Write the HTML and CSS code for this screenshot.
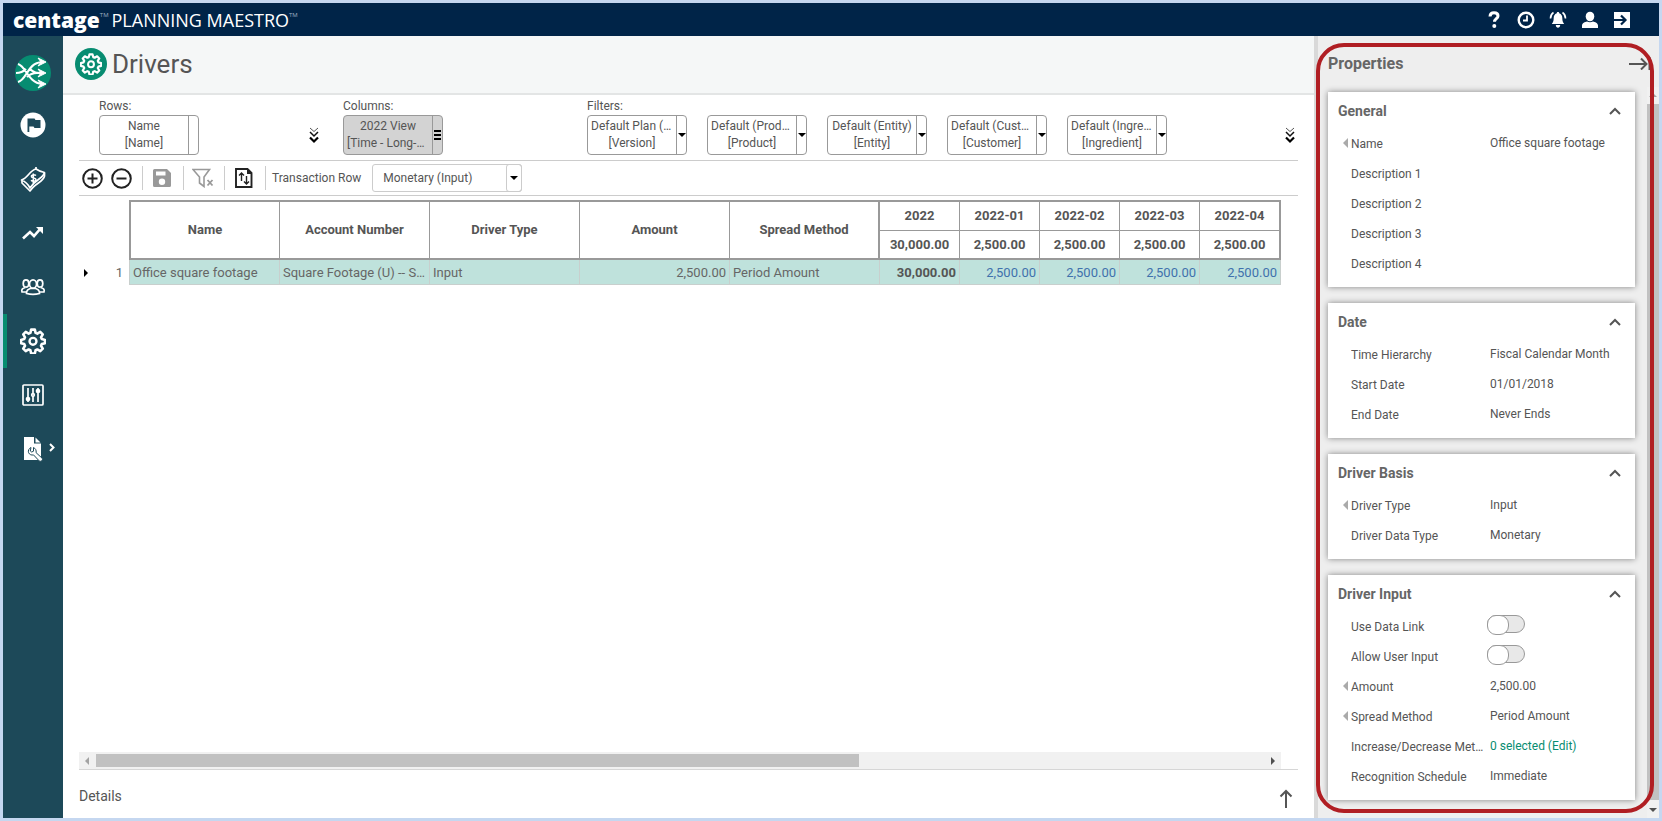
FILE: index.html
```html
<!DOCTYPE html>
<html lang="en">
<head>
  <meta charset="UTF-8">
  <meta name="viewport" content="width=device-width, initial-scale=1.0">
  <title>Drivers - Planning Maestro</title>
  <link rel="stylesheet" href="styles.css">
</head>
<body>
  <!-- Shared icons -->
  <svg class="sprite" aria-hidden="true">
    <symbol id="gear" viewBox="0 0 24 24">
      <path d="M10.300 1.500h3.400l.7 3 1.600.7 2.700-1.600 2.300 2.300-1.600 2.700.7 1.600 3 .8v3l-3 .8-.7 1.600 1.600 2.700-2.300 2.300-2.700-1.600-1.600.7-.7 3h-3.400l-.7-3-1.600-.7-2.700 1.600L3 19.100l1.600-2.700-.7-1.600-3-.8v-3l3-.8.7-1.600L3 5.900l2.300-2.300L8 5.200l1.600-.7z" fill="none" stroke="currentColor" stroke-width="2.400" stroke-linejoin="round"/>
      <circle cx="12" cy="12.300" r="3.200" fill="none" stroke="currentColor" stroke-width="2.200"/>
    </symbol>
    <symbol id="chevrons" viewBox="0 0 10 17">
      <path d="M1 1l4 3.500L9 1" fill="none" stroke="#555" stroke-width="1"/>
      <path d="M1 5l4 4 4-4" fill="none" stroke="#111" stroke-width="1.500"/>
      <path d="M1 10.500l4 4 4-4" fill="none" stroke="#000" stroke-width="2.200"/>
    </symbol>
    <symbol id="up" viewBox="0 0 12 8">
      <path d="M1 7l5-5 5 5" fill="none" stroke="currentColor" stroke-width="2"/>
    </symbol>
  </svg>

  <div class="app">
    <header class="topbar">
      <div class="brand">
        <span class="brand-name">centage</span><sup class="tm">TM</sup>
        <span class="brand-product">PLANNING MAESTRO</span><sup class="tm">TM</sup>
      </div>
      <div class="top-actions">
        <button type="button" aria-label="Help">
          <svg width="18" height="18" viewBox="0 0 18 18"><path d="M5 5.500C5.200 2.700 6.900 1.800 9 1.800c2.300 0 4 1.200 4 3.100 0 2.700-3.500 2.800-3.500 5.900" fill="none" stroke="#fff" stroke-width="3"/><circle cx="9.300" cy="15" r="2" fill="#fff"/></svg>
        </button>
        <button type="button" aria-label="History">
          <svg width="18" height="18" viewBox="0 0 18 18"><circle cx="9" cy="9" r="7.300" fill="none" stroke="#fff" stroke-width="2.400"/><path d="M10 4.500v5H6" fill="none" stroke="#fff" stroke-width="1.800"/></svg>
        </button>
        <button type="button" aria-label="Notifications">
          <svg width="18" height="18" viewBox="0 0 18 18"><path d="M9 1c.8 0 1.200.6 1.200 1.200C12.500 3 13.300 5 13.300 7c0 3 .6 4.500 1.900 6H2.800c1.300-1.500 1.900-3 1.900-6 0-2 .8-4 3.100-4.800C7.800 1.600 8.200 1 9 1zM6.800 14h4.400c0 3.600-4.400 3.600-4.400 0z" fill="#fff"/><path d="M4.500 1.500C2.400 2.800 1.500 5 1.500 7.500M13.500 1.500c2.100 1.300 3 3.500 3 6" fill="none" stroke="#fff" stroke-width="1.600"/></svg>
        </button>
        <button type="button" aria-label="Account">
          <svg width="18" height="18" viewBox="0 0 18 18"><ellipse cx="9" cy="5.500" rx="4.300" ry="4.800" fill="#fff"/><path d="M1 17v-2.500C1 12 4 11 6 10.500c2 1 4 1 6 0 2 .5 5 1.500 5 4V17z" fill="#fff"/></svg>
        </button>
        <button type="button" aria-label="Sign out">
          <svg width="18" height="18" viewBox="0 0 18 18"><path d="M1 1h16v16H1z" fill="#fff"/><path d="M1 9h11M8 4.500L12.500 9 8 13.500" fill="none" stroke="#002448" stroke-width="2.200"/></svg>
        </button>
      </div>
    </header>

    <div class="workspace">
      <nav class="sidebar" aria-label="Main">
        <a class="nav-home" href="#" aria-label="Home">
          <svg width="36" height="36" viewBox="0 0 36 36" fill="none" stroke="#fff" stroke-width="2.200"><circle cx="18" cy="18" r="18" fill="#078c71" stroke="none"/><path d="M3 9c8 2 10 19 24 20M3 27C12 25 12 8 27 7M1 18c5 0 7-1 10-4M15 14c4 4 6 4 14 4M12 22c3-3 5-4 10-4"/><path d="M23 3l8 4-8 4 3-4zM23 14l8 4-8 4 3-4zM23 25l8 4-8 4 3-4z" fill="#fff" stroke-width="1"/></svg>
        </a>
        <a class="nav-item" href="#" aria-label="Goals">
          <svg width="26" height="26" viewBox="0 0 26 26"><circle cx="13" cy="13" r="12.500" fill="#fff"/><path d="M7.500 6.500h7l1 1.500h5v8h-6l-1-1.500H9.300V20H7.500z" fill="#1d4959"/></svg>
        </a>
        <a class="nav-item" href="#" aria-label="Financials">
          <svg width="26" height="26" viewBox="0 0 26 26" fill="none" stroke="#fff" stroke-width="1.700" stroke-linejoin="round"><path d="M1.500 14C8 12 10 4 16 3c3 2 5 3 8.500 3.500-1 6-8 5.500-14.500 15.500C8 18 5 15.500 1.500 14z"/><path d="M2 14.500v2.500L10 25c5-8 13.500-9 14.500-15V7M16 3V1"/><path d="M16 9.500c-2-1.500-5-.5-4.500 1.200s4.500.8 4.500 2.800-3.500 2.300-5 .8M13.300 7.500v9.500" stroke-width="1.500"/></svg>
        </a>
        <a class="nav-item" href="#" aria-label="Trends">
          <svg width="24" height="24" viewBox="0 0 24 24"><path d="M2 17.500l7-6.500 4 4 7-8" fill="none" stroke="#fff" stroke-width="2.600"/><path d="M15 6h7v7z" fill="#fff"/></svg>
        </a>
        <a class="nav-item" href="#" aria-label="Personnel">
          <svg width="26" height="18" viewBox="0 0 26 18" fill="#1d4959" stroke="#fff" stroke-width="1.700"><ellipse cx="6" cy="5.500" rx="2.800" ry="3.600"/><ellipse cx="20" cy="5.500" rx="2.800" ry="3.600"/><path d="M7 14H2c-1-3 1-4 3.500-4.500M19 14h5c1-3-1-4-3.500-4.500"/><ellipse cx="13" cy="6" rx="3.500" ry="4.200"/><path d="M10.500 10.500C8 11.500 6.500 12 6.500 15.500c4 1 9 1 13 0 0-3.500-1.500-4-4-5z"/></svg>
        </a>
        <a class="nav-item active" href="#" aria-label="Drivers" aria-current="page">
          <svg width="26" height="26"><use href="#gear"/></svg>
        </a>
        <a class="nav-item" href="#" aria-label="Settings">
          <svg width="22" height="22" viewBox="0 0 22 22" fill="none" stroke="#fff" stroke-width="1.700"><rect x="1" y="1" width="20" height="20" rx="1"/><path d="M6 4v14M11 4v14M16 4v14"/><circle cx="6" cy="15" r="1.500" fill="#fff"/><circle cx="11" cy="11" r="1.300" fill="#1d4959"/><circle cx="16" cy="7" r="1.500" fill="#fff"/></svg>
        </a>
        <a class="nav-item" href="#" aria-label="Tools">
          <svg width="20" height="26" viewBox="0 0 20 26"><path d="M1 1h10v6.500h7V24H1z" fill="#fff"/><path d="M12.500 1.500l5 5h-5z" fill="#fff"/><path d="M8 11.500c-2 .8-3.200 3.200-2.400 5.200.9 2 3 2.700 4.900 2.200l5.700 6c1.500 1.300 4.300-1 2.900-2.700l-6-5.500c.4-2.600-.6-4.200-2.600-5.200v3.700l-1.800.8-1.400-1z" fill="#fff" stroke="#1d4959" stroke-width="1"/></svg>
          <svg class="nav-more" width="6" height="9" viewBox="0 0 6 9"><path d="M1 1l3.500 3.500L1 8" fill="none" stroke="#fff" stroke-width="2"/></svg>
        </a>
      </nav>

      <main class="content">
        <div class="page-title">
          <span class="title-icon"><svg width="22" height="22"><use href="#gear"/></svg></span>
          <h1>Drivers</h1>
        </div>

        <div class="panel">
          <section class="dimensions">
            <div class="dim-group rows">
              <span class="dim-label">Rows:</span>
              <button class="dim" type="button"><span class="dim-text"><span>Name</span><span>[Name]</span></span><span class="dim-handle"></span></button>
            </div>
            <button class="expand" type="button" aria-label="More rows"><svg width="10" height="17"><use href="#chevrons"/></svg></button>
            <div class="dim-group columns">
              <span class="dim-label">Columns:</span>
              <button class="dim selected" type="button"><span class="dim-text"><span>2022 View</span><span>[Time - Long-Term]</span></span><span class="dim-handle"><i class="bars"></i></span></button>
            </div>
            <div class="dim-group filters">
              <span class="dim-label">Filters:</span>
              <div class="dim-list">
                <button class="dim" type="button"><span class="dim-text"><span>Default Plan (Version)</span><span>[Version]</span></span><span class="dim-handle"><i class="caret"></i></span></button>
                <button class="dim" type="button"><span class="dim-text"><span>Default (Product)</span><span>[Product]</span></span><span class="dim-handle"><i class="caret"></i></span></button>
                <button class="dim" type="button"><span class="dim-text"><span>Default (Entity)</span><span>[Entity]</span></span><span class="dim-handle"><i class="caret"></i></span></button>
                <button class="dim" type="button"><span class="dim-text"><span>Default (Customer)</span><span>[Customer]</span></span><span class="dim-handle"><i class="caret"></i></span></button>
                <button class="dim" type="button"><span class="dim-text"><span>Default (Ingredient)</span><span>[Ingredient]</span></span><span class="dim-handle"><i class="caret"></i></span></button>
              </div>
            </div>
            <button class="expand last" type="button" aria-label="More filters"><svg width="10" height="17"><use href="#chevrons"/></svg></button>
          </section>

          <div class="toolbar">
            <div class="tool-group first">
              <button type="button" aria-label="Add row"><svg width="21" height="21" viewBox="0 0 21 21" fill="none" stroke="#222" stroke-width="2"><circle cx="10.500" cy="10.500" r="9.300"/><path d="M10.500 5.500v10M5.500 10.500h10"/></svg></button>
              <button type="button" aria-label="Remove row"><svg width="21" height="21" viewBox="0 0 21 21" fill="none" stroke="#222" stroke-width="2"><circle cx="10.500" cy="10.500" r="9.300"/><path d="M5.500 10.500h10"/></svg></button>
            </div>
            <div class="tool-group">
              <button type="button" aria-label="Save"><svg width="18" height="18" viewBox="0 0 18 18"><path d="M1.500 0H14l4 4v12.500a1.500 1.500 0 0 1-1.500 1.500h-15A1.500 1.500 0 0 1 0 16.500v-15A1.500 1.500 0 0 1 1.500 0zM3 2.500v4h9.500v-4zM9 9.500a3.200 3.200 0 1 0 0 6.400 3.200 3.200 0 0 0 0-6.400z" fill="#999" fill-rule="evenodd"/></svg></button>
            </div>
            <div class="tool-group">
              <button type="button" aria-label="Clear filter"><svg width="22" height="20" viewBox="0 0 22 20" fill="none" stroke="#999"><path d="M1 1.500h16.500L12 9v9.500L7.500 15V9z" stroke-width="1.600"/><path d="M15.500 12l5 5.500M20.500 12l-5 5.500" stroke-width="1.800"/></svg></button>
            </div>
            <div class="tool-group">
              <button type="button" aria-label="Import and export"><svg width="18" height="20" viewBox="0 0 18 20" fill="none" stroke="#222"><path d="M1 1h11.500L16.500 5v14H1z" stroke-width="1.900"/><path d="M12 1v5h5z" fill="#222" stroke="none"/><path d="M6.500 13V5M4 7.500L6.500 5 9 7.500M11.500 8v8M9 13.500l2.500 2.500 2.500-2.500" stroke-width="1.400"/></svg></button>
            </div>
            <label for="transaction-row">Transaction Row</label>
            <span class="combo">
              <select id="transaction-row"><option>Monetary (Input)</option></select>
              <span class="combo-arrow"><i class="caret"></i></span>
            </span>
          </div>

          <div class="grid-wrap">
            <table class="grid">
              <colgroup>
                <col class="c-mark"><col class="c-num">
                <col class="c-first"><col class="c-wide"><col class="c-wide"><col class="c-wide"><col class="c-wide">
                <col class="c-date"><col class="c-date"><col class="c-date"><col class="c-date"><col class="c-last">
              </colgroup>
              <thead>
                <tr>
                  <td class="blank" colspan="2" rowspan="2"></td>
                  <th rowspan="2" class="low first">Name</th>
                  <th rowspan="2" class="low">Account Number</th>
                  <th rowspan="2" class="low">Driver Type</th>
                  <th rowspan="2" class="low">Amount</th>
                  <th rowspan="2" class="low edge">Spread Method</th>
                  <th>2022</th>
                  <th>2022-01</th>
                  <th>2022-02</th>
                  <th>2022-03</th>
                  <th class="edge">2022-04</th>
                </tr>
                <tr class="totals">
                  <th class="low">30,000.00</th>
                  <th class="low">2,500.00</th>
                  <th class="low">2,500.00</th>
                  <th class="low">2,500.00</th>
                  <th class="low edge">2,500.00</th>
                </tr>
              </thead>
              <tbody>
                <tr>
                  <td class="blank mark"><i class="row-mark"></i></td>
                  <td class="blank num">1</td>
                  <td class="first">Office square footage</td>
                  <td>Square Footage (U) -- Statistical</td>
                  <td>Input</td>
                  <td class="right">2,500.00</td>
                  <td>Period Amount</td>
                  <td class="right total">30,000.00</td>
                  <td class="right value">2,500.00</td>
                  <td class="right value">2,500.00</td>
                  <td class="right value">2,500.00</td>
                  <td class="right value">2,500.00</td>
                </tr>
              </tbody>
            </table>
          </div>

          <div class="h-scroll">
            <i class="arrow-left"></i>
            <span class="h-track"><span class="h-thumb"></span></span>
            <i class="arrow-right"></i>
          </div>

          <div class="details">
            <h2>Details</h2>
            <button type="button" aria-label="Expand details"><svg width="14" height="20" viewBox="0 0 14 20" fill="none" stroke="#555" stroke-width="2"><path d="M7 19V2M1.500 7.500L7 2l5.500 5.500"/></svg></button>
          </div>
        </div>
      </main>

      <aside class="properties">
        <div class="prop-head">
          <h2>Properties</h2>
          <button type="button" aria-label="Collapse properties"><svg width="22" height="14" viewBox="0 0 22 14" fill="none" stroke="#555" stroke-width="2"><path d="M0 8h17M12 2.500L17.500 8 12 13.500M20.500 1v13"/></svg></button>
        </div>
        <div class="prop-body">
          <div class="cards">
            <section class="card">
              <div class="card-head"><h3>General</h3><button type="button" aria-label="Collapse General"><svg width="12" height="8"><use href="#up"/></svg></button></div>
              <dl>
                <dt class="linked">Name</dt><dd>Office square footage</dd>
                <dt>Description 1</dt><dd></dd>
                <dt>Description 2</dt><dd></dd>
                <dt>Description 3</dt><dd></dd>
                <dt>Description 4</dt><dd></dd>
              </dl>
            </section>
            <section class="card">
              <div class="card-head"><h3>Date</h3><button type="button" aria-label="Collapse Date"><svg width="12" height="8"><use href="#up"/></svg></button></div>
              <dl>
                <dt>Time Hierarchy</dt><dd>Fiscal Calendar Month</dd>
                <dt>Start Date</dt><dd>01/01/2018</dd>
                <dt>End Date</dt><dd>Never Ends</dd>
              </dl>
            </section>
            <section class="card">
              <div class="card-head"><h3>Driver Basis</h3><button type="button" aria-label="Collapse Driver Basis"><svg width="12" height="8"><use href="#up"/></svg></button></div>
              <dl>
                <dt class="linked">Driver Type</dt><dd>Input</dd>
                <dt>Driver Data Type</dt><dd>Monetary</dd>
              </dl>
            </section>
            <section class="card">
              <div class="card-head"><h3>Driver Input</h3><button type="button" aria-label="Collapse Driver Input"><svg width="12" height="8"><use href="#up"/></svg></button></div>
              <dl>
                <dt><label for="data-link">Use Data Link</label></dt><dd class="has-switch"><input class="switch" type="checkbox" id="data-link"></dd>
                <dt><label for="user-input">Allow User Input</label></dt><dd class="has-switch"><input class="switch" type="checkbox" id="user-input"></dd>
                <dt class="linked">Amount</dt><dd>2,500.00</dd>
                <dt class="linked">Spread Method</dt><dd>Period Amount</dd>
                <dt>Increase/Decrease Methods</dt><dd><a href="#">0 selected (Edit)</a></dd>
                <dt>Recognition Schedule</dt><dd>Immediate</dd>
              </dl>
            </section>
          </div>
          <div class="v-scroll">
            <i class="arrow-up"></i>
            <span class="v-thumb"></span>
            <i class="arrow-down"></i>
          </div>
        </div>
        <div class="highlight"></div>
      </aside>
    </div>
  </div>
</body>
</html>
```
FILE: styles.css
```css
* {
  box-sizing: border-box;
}
body {
  margin: 0;
  font-family: Roboto, "Liberation Sans", sans-serif;
  font-size: 12px;
  color: #555;
}
h1, h2, h3, dl, dd {
  margin: 0;
}
button {
  border: 0;
  padding: 0;
  background: none;
  font: inherit;
  color: inherit;
}
svg {
  display: block;
}
.sprite {
  position: absolute;
  width: 0;
  height: 0;
}
.app {
  display: flex;
  flex-direction: column;
  min-height: 100vh;
  border: 3px solid #c5d7f0;
}

/* Top bar */
.topbar {
  display: flex;
  justify-content: space-between;
  align-items: center;
  height: 33px;
  padding: 0 21px 0 10px;
  background: #002448;
  color: #fff;
}
.brand {
  display: flex;
  align-items: center;
  height: 30px;
  font-family: "Open Sans", "Noto Sans", sans-serif;
}
.brand-name {
  font-size: 21px;
  font-weight: 800;
}
.brand-product {
  margin-left: 3px;
  font-size: 18px;
  font-weight: 400;
}
.tm {
  align-self: flex-start;
  margin-top: 6px;
  font-size: 6px;
  line-height: 8px;
  color: #9fb0c2;
}
.top-actions {
  display: flex;
}
.top-actions button {
  display: flex;
  justify-content: center;
  width: 32px;
}

.workspace {
  display: flex;
  flex: 1;
}

/* Sidebar */
.sidebar {
  width: 60px;
  background: #1d4959;
}
.nav-home {
  display: flex;
  justify-content: center;
  height: 62px;
  padding-top: 19px;
}
.nav-item {
  position: relative;
  display: flex;
  align-items: center;
  justify-content: center;
  height: 54px;
  color: #fff;
}
.nav-item.active {
  box-shadow: inset 4px 0 #078c71;
}
.nav-more {
  position: absolute;
  right: 8px;
  top: 21px;
}

/* Main area */
.content {
  display: flex;
  flex: 1;
  flex-direction: column;
  min-width: 0;
  background: #fff;
}
.page-title {
  display: flex;
  align-items: center;
  gap: 5px;
  height: 59px;
  padding: 0 12px 2px;
  background: #f5f7f7;
  border-bottom: 2px solid #e3e5e5;
}
.page-title h1 {
  font-size: 26px;
  font-weight: 400;
}
.title-icon {
  display: flex;
  align-items: center;
  justify-content: center;
  width: 32px;
  height: 32px;
  border-radius: 50%;
  background: #078c71;
  color: #fff;
}
.panel {
  display: flex;
  flex: 1;
  flex-direction: column;
  padding: 0 16px;
}
.dimensions {
  display: flex;
  height: 66px;
  padding: 4px 0 0 20px;
  border-bottom: 1px solid #ccc;
}
.dim-label {
  display: block;
  height: 16px;
  line-height: 14px;
}
.rows {
  width: 210px;
}
.columns {
  margin-left: 24px;
  width: 244px;
}
.dim-list {
  display: flex;
  gap: 20px;
}
.dim {
  display: flex;
  width: 100px;
  height: 40px;
  overflow: hidden;
  border: 1px solid #999;
  border-radius: 4px;
  background: #fff;
}
.dim.selected {
  background: #d3d3d3;
}
.dim-text {
  flex: 1;
  min-width: 0;
  padding: 2px 3px;
  line-height: 17px;
  text-align: center;
}
.dim-text span {
  display: block;
  overflow: hidden;
  white-space: nowrap;
  text-overflow: ellipsis;
}
.dim-handle {
  display: flex;
  align-items: center;
  justify-content: center;
  align-self: stretch;
  width: 10px;
  border-left: 1px solid #999;
}
.bars {
  width: 7px;
  height: 10px;
  background: repeating-linear-gradient(#000 0 2px, transparent 2px 4px);
}
.caret {
  border: 4px solid transparent;
  border-top: 4px solid #000;
  border-bottom: 0;
}
.expand {
  align-self: flex-start;
  margin-top: 28px;
}
.expand.last {
  margin-left: auto;
  margin-right: 3px;
}

/* Toolbar */
.toolbar {
  display: flex;
  align-items: center;
  height: 35px;
  border-bottom: 1px solid #ccc;
}
.tool-group {
  display: flex;
  align-items: center;
  justify-content: center;
  gap: 8px;
  width: 41px;
  height: 24px;
  padding-right: 2px;
  border-right: 1px solid #ccc;
}
.tool-group.first {
  justify-content: flex-start;
  width: 64px;
  padding-left: 3px;
}
.toolbar label {
  margin: 0 11px 0 6px;
}
.combo {
  position: relative;
}
.combo select {
  display: block;
  width: 150px;
  height: 28px;
  padding: 0 28px 0 10px;
  appearance: none;
  border: 1px solid #ccc;
  border-radius: 3px;
  background: #fff;
  font: inherit;
  color: inherit;
}
.combo-arrow {
  position: absolute;
  top: 0;
  right: 0;
  display: flex;
  align-items: center;
  justify-content: center;
  width: 16px;
  height: 28px;
  border: 1px solid #ccc;
  border-radius: 3px;
  pointer-events: none;
}

/* Data grid */
.grid-wrap {
  flex: 1;
  padding-top: 4px;
}
.grid {
  width: 1202px;
  table-layout: fixed;
  border-spacing: 0;
  font-size: 13px;
}
.c-mark, .c-num {
  width: 25px;
}
.c-first {
  width: 151px;
}
.c-wide {
  width: 150px;
}
.c-date {
  width: 80px;
}
.c-last {
  width: 81px;
}
.grid th {
  height: 30px;
  padding: 0 0 2px;
  border: solid #999;
  border-width: 2px 1px 0 0;
  font-weight: 700;
}
.grid .totals th {
  padding: 0;
  border-top-width: 1px;
}
.grid th.low {
  border-bottom-width: 2px;
}
.grid th.first {
  border-left-width: 2px;
}
.grid th.edge {
  border-right-width: 2px;
}
.grid tbody td {
  height: 25px;
  padding: 0 3px;
  overflow: hidden;
  border: solid #c8cfcd;
  border-width: 0 1px 1px 0;
  background: #bfe2dc;
  white-space: nowrap;
  text-overflow: ellipsis;
  color: #666;
}
.grid tbody td.first {
  border-left-width: 1px;
}
.grid tbody td.blank {
  border: 0;
  background: none;
}
.grid .mark {
  padding-left: 5px;
}
.grid .num {
  padding-right: 6px;
  text-align: right;
}
.row-mark {
  display: block;
  width: 0;
  border: 4px solid transparent;
  border-left: 4px solid #000;
  border-right: 0;
}
.grid .right {
  text-align: right;
}
.grid tbody td.total {
  font-weight: 700;
  color: #555;
}
.grid tbody td.value {
  color: #3f71ad;
}

/* Horizontal scrollbar */
.h-scroll {
  display: flex;
  align-items: center;
  height: 17px;
  margin-right: 17px;
  padding: 0 6px;
  background: #f1f1f1;
}
.h-track {
  flex: 1;
  margin: 0 7px;
}
.h-thumb {
  display: block;
  width: 65.3%;
  height: 13px;
  background: #c1c1c1;
}
.arrow-left {
  border: 4px solid transparent;
  border-right-color: #a3a3a3;
  border-left: 0;
}
.arrow-right {
  border: 4px solid transparent;
  border-left-color: #505050;
  border-right: 0;
}
.details {
  display: flex;
  align-items: center;
  justify-content: space-between;
  height: 49px;
  padding: 3px 5px 0 0;
  border-top: 1px solid #d6d6d6;
}
.details h2 {
  font-size: 14px;
  font-weight: 400;
}
.details button {
  padding-top: 6px;
}

/* Properties */
.properties {
  position: relative;
  display: flex;
  flex-direction: column;
  width: 345px;
  border-left: 4px solid #d9d9d9;
  background: #eee;
}
.prop-head {
  display: flex;
  align-items: center;
  justify-content: space-between;
  height: 51px;
  padding: 3px 8px 0 10px;
}
.prop-head h2 {
  font-size: 16px;
  font-weight: 700;
  color: #666;
}
.prop-body {
  display: flex;
  flex: 1;
}
.cards {
  display: flex;
  flex: 1;
  flex-direction: column;
  gap: 16px;
  min-width: 0;
  padding: 5px 12px 18px 10px;
}
.card {
  padding-bottom: 9px;
  background: #fff;
  box-shadow: 0 0 6px rgba(0, 0, 0, 0.45);
}
.card-head {
  display: flex;
  align-items: center;
  justify-content: space-between;
  height: 36px;
  padding: 2px 14px 0 10px;
}
.card-head h3 {
  font-size: 14px;
  font-weight: 700;
  color: #666;
}
.card dl {
  display: grid;
  grid-template-columns: 135px 1fr;
  column-gap: 4px;
  grid-auto-rows: 30px;
  padding-left: 23px;
  line-height: 30px;
  white-space: nowrap;
}
.card dt {
  overflow: hidden;
  line-height: 32px;
  text-overflow: ellipsis;
}
.card dt.linked::before {
  content: "";
  display: inline-block;
  margin: 0 3px 0 -8px;
  border: 5px solid transparent;
  border-right-color: #aaa;
  border-left: 0;
}
.card dt.linked {
  overflow: visible;
}
.card a {
  color: #078c71;
  text-decoration: none;
}
.card .has-switch {
  display: flex;
  align-items: flex-start;
  padding-top: 4px;
  margin-left: -3px;
}
.switch {
  width: 38px;
  height: 18px;
  margin: 0;
  appearance: none;
  border: 1px solid #999;
  border-radius: 9px;
  background: #e8e8e8;
}
.switch::before {
  content: "";
  display: block;
  width: 20px;
  height: 18px;
  margin: -1px;
  border: 1px solid #999;
  border-radius: 9px;
  background: #fff;
}
.switch:checked::before {
  margin-left: 17px;
}

/* Vertical scrollbar */
.v-scroll {
  display: flex;
  flex-direction: column;
  align-items: center;
  width: 12px;
  background: #f1f1f1;
}
.v-thumb {
  flex: 1;
  width: 12px;
  background: #c1c1c1;
}
.arrow-up {
  margin: 6px 0 7px;
  border: 4px solid transparent;
  border-bottom-color: #a3a3a3;
  border-top: 0;
}
.arrow-down {
  margin: 8px 0 6px;
  border: 4px solid transparent;
  border-top-color: #505050;
  border-bottom: 0;
}
.highlight {
  position: absolute;
  top: 7px;
  right: 5px;
  bottom: 5px;
  left: -2px;
  border: 4px solid #b01e23;
  border-radius: 28px;
  pointer-events: none;
}
```
